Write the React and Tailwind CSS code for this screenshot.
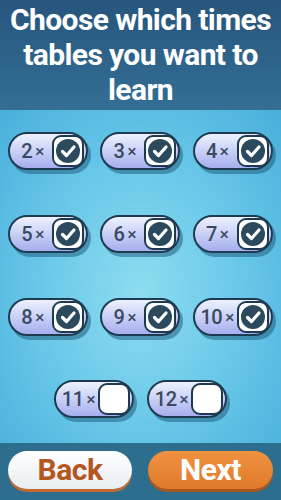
import React from 'react'

const tables = [
  { n: 2, on: true }, { n: 3, on: true }, { n: 4, on: true },
  { n: 5, on: true }, { n: 6, on: true }, { n: 7, on: true },
  { n: 8, on: true }, { n: 9, on: true }, { n: 10, on: true },
  { n: 11, on: false }, { n: 12, on: false },
]

const font = { fontFamily: '"Liberation Sans Narrow", "Roboto", "Liberation Sans", sans-serif' }

function Pill({ n, on }) {
  return (
    <div className="w-[80px] h-[38px] rounded-[19px] border-2 border-[#1d3b50] bg-gradient-to-b from-[#eef2fd] to-[#a6aeee] shadow-[3px_4px_0_rgba(25,85,120,0.5)] flex items-center pr-[2px]">
      <div className="flex-1 flex items-center justify-center text-[#3a4a60] font-medium text-[20px] leading-none pl-[3px] tracking-[-0.5px]" style={font}>
        {n}<span className="text-[17px] ml-[3px]">×</span>
      </div>
      <div className="w-[32px] h-[32px] rounded-[9px] border-2 border-[#1d3b50] bg-white flex items-center justify-center">
        {on && (
          <svg width="26" height="26" viewBox="0 0 26 26">
            <circle cx="13" cy="13" r="12" fill="#2c4a5e" />
            <path d="M7.5 13.5 L11.5 17.5 L19 9" fill="none" stroke="#fff" strokeWidth="3.2" strokeLinecap="round" strokeLinejoin="round" />
          </svg>
        )}
      </div>
    </div>
  )
}

export default function App() {
  return (
    <div className="w-[281px] h-[500px] flex flex-col overflow-hidden" style={font}>
      <div className="h-[110px] shrink-0 bg-gradient-to-b from-[#27557d] to-[#336f95] pt-[2px] text-center text-white font-bold text-[30px] leading-[35px] tracking-[-0.6px]">
        Choose which times tables you want to learn
      </div>
      <div className="flex-1 bg-[radial-gradient(ellipse_at_50%_55%,#8edcf0_0%,#66c6e8_55%,#4aaedb_100%)] pt-[22px]">
        <div className="grid grid-cols-3 gap-x-[12px] gap-y-[45px] px-[8px]">
          {tables.slice(0, 9).map((t) => <Pill key={t.n} {...t} />)}
        </div>
        <div className="flex justify-center gap-[13px] mt-[44px]">
          {tables.slice(9).map((t) => <Pill key={t.n} {...t} />)}
        </div>
      </div>
      <div className="h-[57px] shrink-0 bg-[#2d6d8d] flex gap-[16px] px-[8px] pt-[8px]">
        <button className="w-[124px] h-[38px] rounded-[19px] bg-gradient-to-b from-white to-[#e9eef2] shadow-[0_3px_0_#c46a2a] text-[#b4561d] font-bold text-[30px] leading-none tracking-[-0.5px]" style={font}>
          Back
        </button>
        <button className="w-[125px] h-[38px] rounded-[19px] bg-gradient-to-b from-[#f0923f] to-[#e17a2b] shadow-[0_3px_0_#a9561c] text-white font-bold text-[30px] leading-none tracking-[-0.5px]" style={font}>
          Next
        </button>
      </div>
    </div>
  )
}
